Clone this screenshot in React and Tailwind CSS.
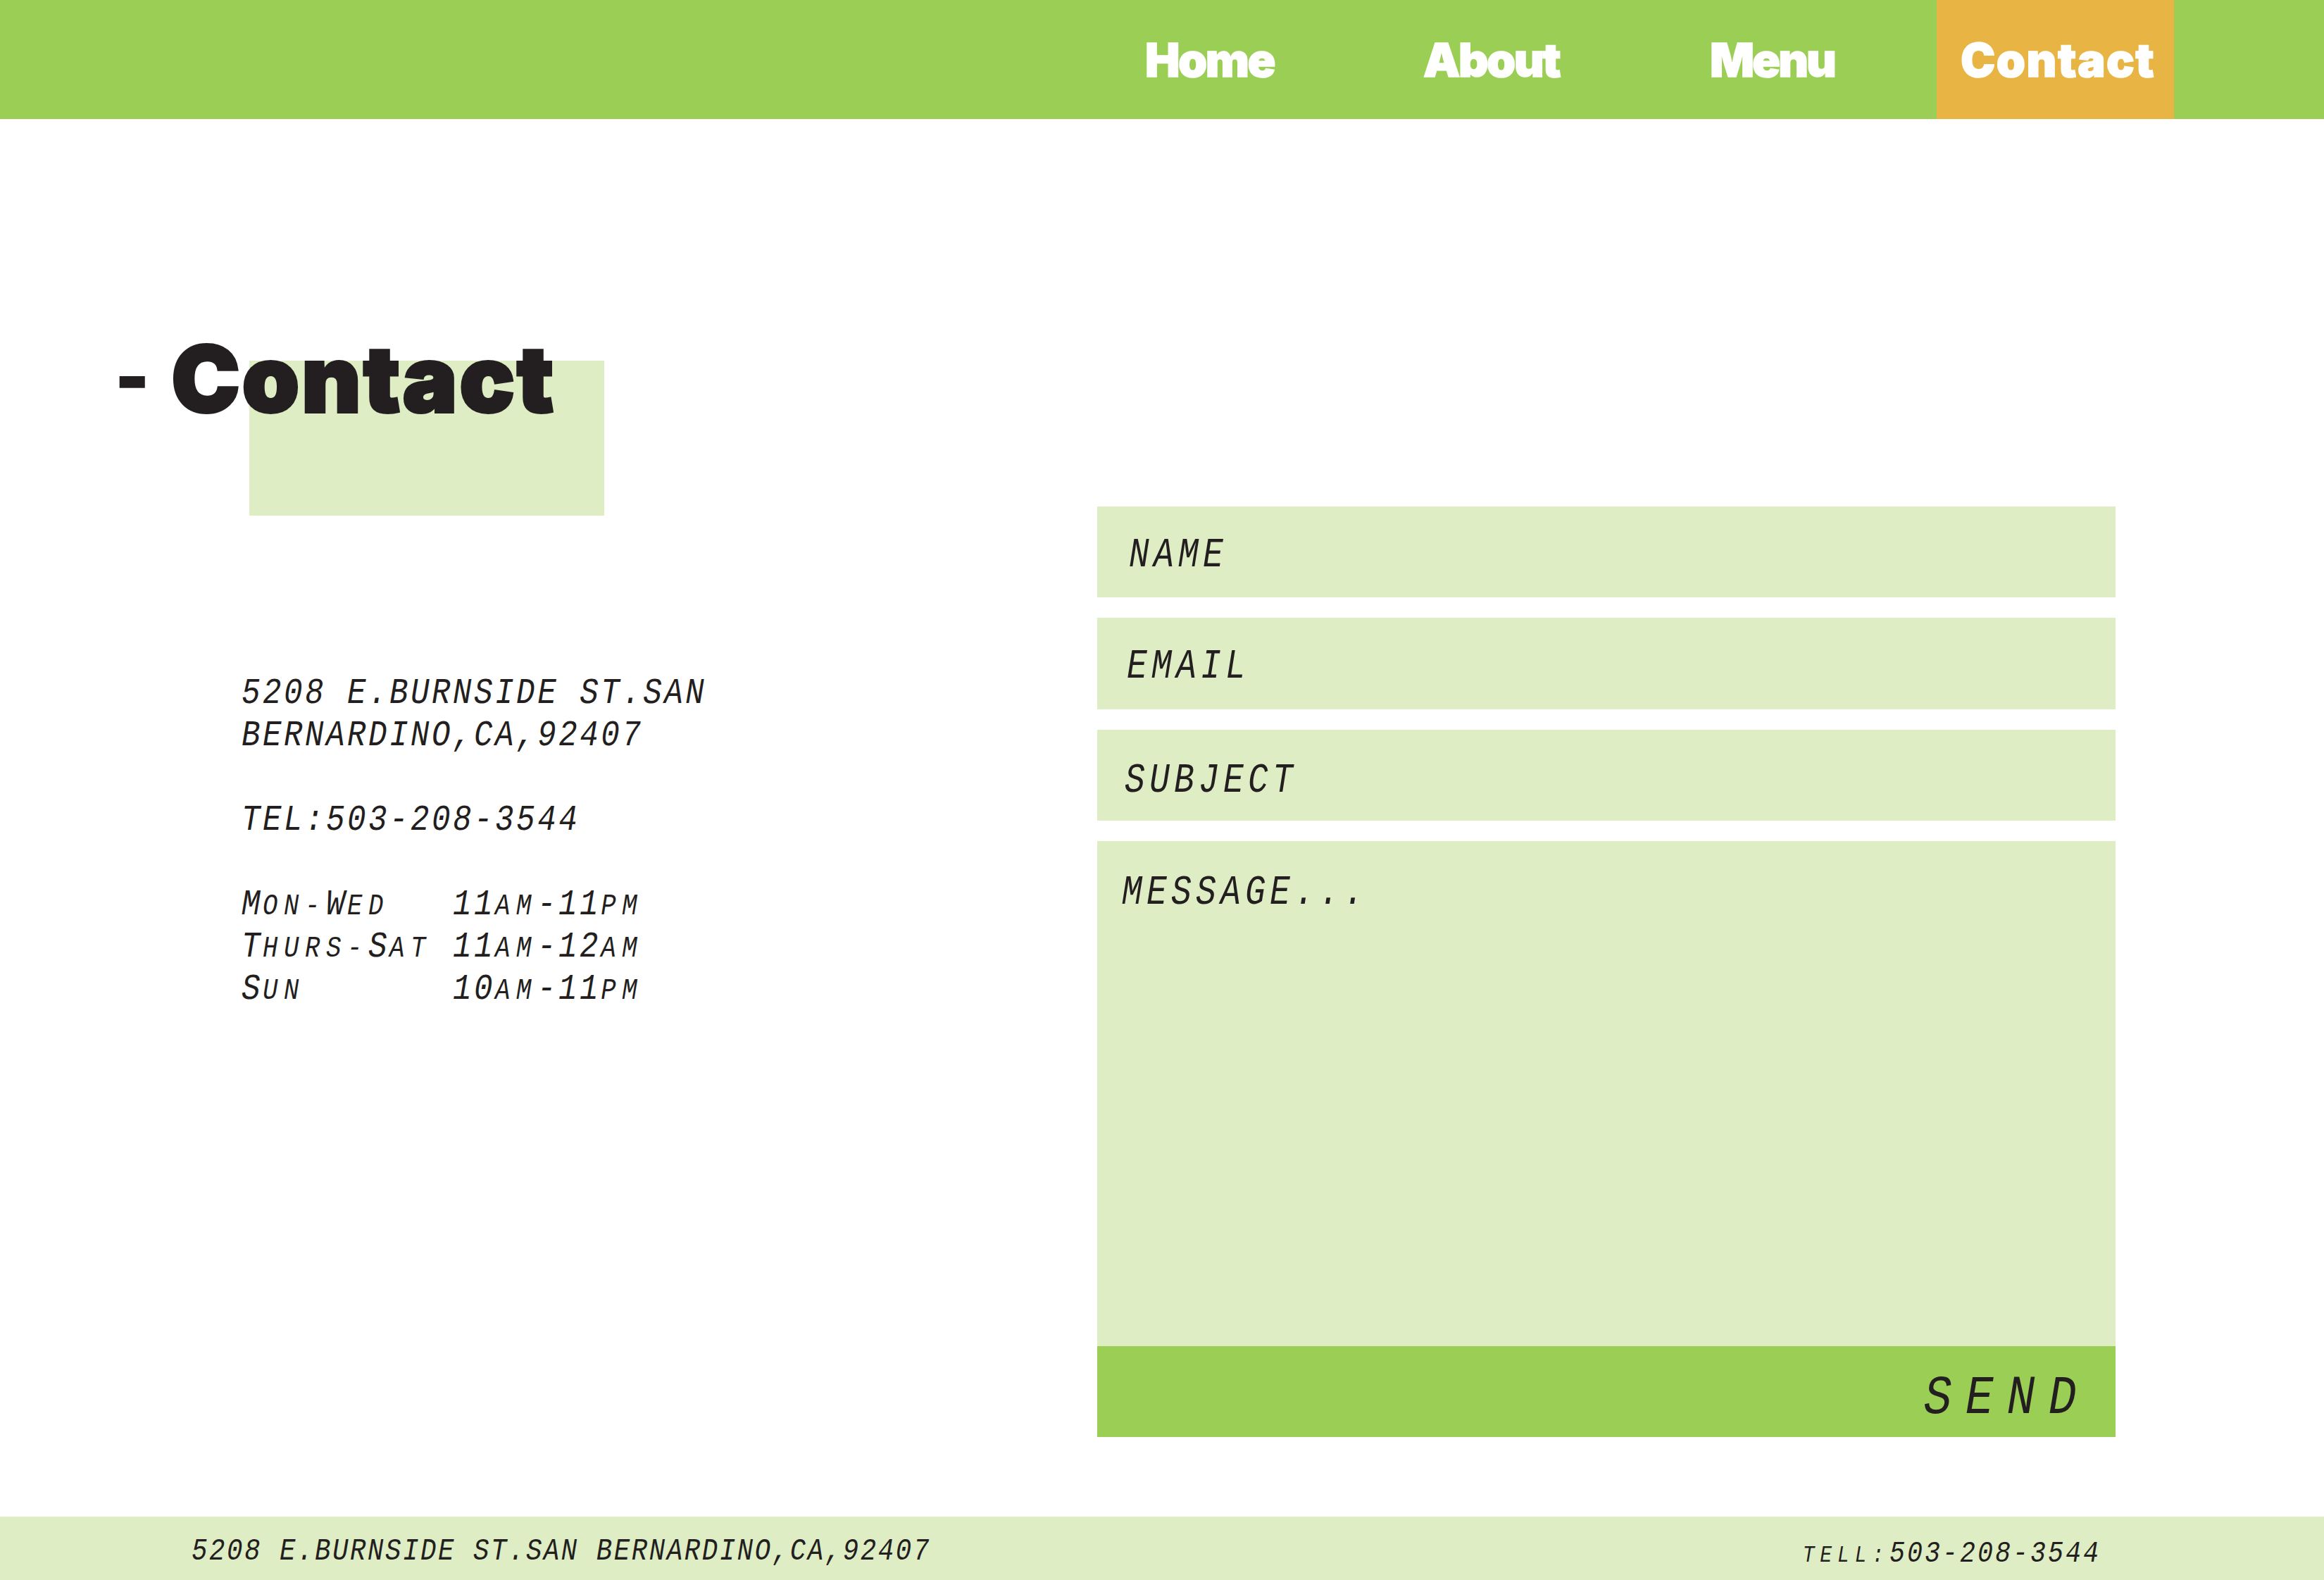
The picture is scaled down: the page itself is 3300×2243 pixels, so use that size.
const navLinks = [
  { label: "Home", className: "w-[395px] tracking-[-2.5px]" },
  { label: "About", className: "w-[407px] tracking-[-2.5px]" },
  { label: "Menu", className: "w-[322px] tracking-[-3px]" },
  { label: "Contact", className: "w-[337px] pl-[34px] tracking-[1.5px] bg-[#e8b444]" },
];

const fields = [
  { label: "NAME", className: "h-[129px] pl-[45px] pt-[8px]" },
  { label: "EMAIL", className: "h-[130px] pl-[42px] pt-[8px]" },
  { label: "SUBJECT", className: "h-[129px] pl-[39px] pt-[14px]" },
];

const hours = [
  { days: ["M", "on-", "W", "ed"], open: ["11", "am", "-11", "pm"] },
  { days: ["T", "hurs-", "S", "at"], open: ["11", "am", "-12", "am"] },
  { days: ["S", "un"], open: ["10", "am", "-11", "pm"] },
];

function SmallCaps({ parts }) {
  return parts.map((part, i) =>
    /[a-z]/.test(part) ? (
      <span key={i} className="text-[42px] leading-none tracking-[10.1px] uppercase">
        {part}
      </span>
    ) : (
      <span key={i}>{part}</span>
    )
  );
}

export default function App() {
  return (
    <div className="min-h-[2243px] flex flex-col overflow-hidden bg-white text-[#231f20] font-['Liberation_Mono',monospace] italic">
      <header className="h-[169px] bg-[#9bce54] flex justify-end pr-[213px]">
        {navLinks.map((link) => (
          <a
            key={link.label}
            className={`${link.className} flex items-center pt-[2px] font-['Inter',sans-serif] not-italic font-black text-[66px] text-white [-webkit-text-stroke:1.5px_white]`}
          >
            {link.label}
          </a>
        ))}
      </header>

      <main className="flex-1 flex">
        <section className="w-[1558px]">
          <div className="relative pl-[164px] pt-[291px]">
            <div className="absolute left-[354px] top-[343px] w-[504px] h-[220px] bg-[#deedc4]" />
            <h1 className="relative font-['Inter',sans-serif] not-italic font-black text-[130px] leading-[150px] tracking-[3.2px] [-webkit-text-stroke:4px_#231f20] whitespace-pre">
              <span className="inline-block text-[100px] tracking-normal align-[14px] mr-[32px] [-webkit-text-stroke:2px_#231f20]">-</span>
              Contact
            </h1>
          </div>
          <div className="pl-[343px] pt-[342px]">
            <div className="origin-left scale-x-[.85] text-[52px] leading-[60px] tracking-[4.1px] whitespace-pre">
              <p>5208 E.BURNSIDE ST.SAN</p>
              <p>BERNARDINO,CA,92407</p>
              <p className="mt-[60px]">TEL:503-208-3544</p>
              <div className="mt-[60px]">
                {hours.map((row, i) => (
                  <div key={i} className="flex">
                    <span className="w-[353px]">
                      <SmallCaps parts={row.days} />
                    </span>
                    <span>
                      <SmallCaps parts={row.open} />
                    </span>
                  </div>
                ))}
              </div>
            </div>
          </div>
        </section>

        <form className="w-[1446px] pt-[550px] flex flex-col gap-[29px] text-[60px] leading-[70px] tracking-[7.75px] whitespace-pre">
          {fields.map((field) => (
            <div key={field.label} className={`${field.className} bg-[#deedc4] flex items-center`}>
              <span className="origin-left scale-x-[.8]">{field.label}</span>
            </div>
          ))}
          <div>
            <div className="h-[717px] bg-[#deedc4] pl-[35px] pt-[38px]">
              <p className="origin-left scale-x-[.8]">MESSAGE...</p>
            </div>
            <button
              type="button"
              className="w-full h-[129px] bg-[#9bce54] flex items-center justify-end pr-[36px] pt-[18px] text-[78px] leading-[90px] tracking-[22.6px] italic"
            >
              <span className="origin-right scale-x-[.85]">SEND</span>
            </button>
          </div>
        </form>
      </main>

      <footer className="h-[90px] bg-[#deedc4] flex items-center justify-between pl-[272px] pr-[317px] pt-[8px] text-[44px] tracking-[3px] whitespace-pre">
        <span className="origin-left scale-x-[.85]">5208 E.BURNSIDE ST.SAN BERNARDINO,CA,92407</span>
        <span className="origin-right scale-x-[.85] text-[43px] tracking-[3.6px] pt-[8px]">
          <span className="text-[33px] leading-none tracking-[9.2px]">TELL:</span>503-208-3544
        </span>
      </footer>
    </div>
  );
}
